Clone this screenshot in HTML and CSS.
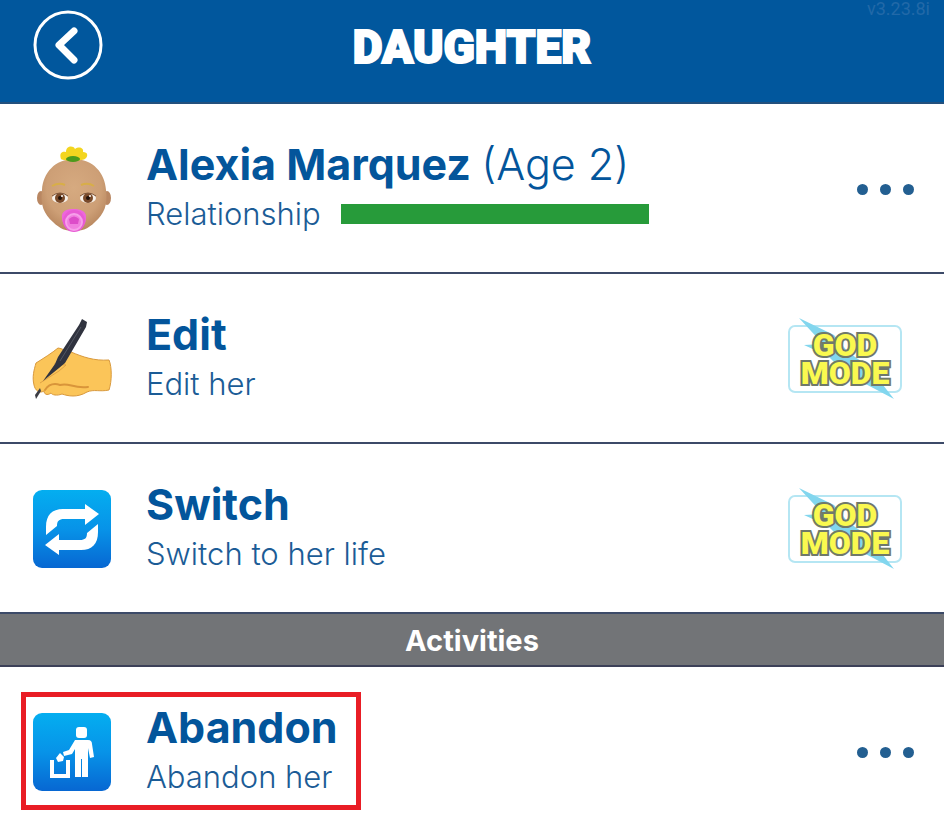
FILE: index.html
```
<!DOCTYPE html>
<html lang="en">
<head>
    <meta charset="UTF-8">
    <meta name="viewport" content="width=device-width, initial-scale=1.0">
    <title>Daughter</title>
    <link rel="stylesheet" href="styles.css">
</head>
<body>
    <header class="topbar">
        <button class="back" aria-label="Back">
            <svg viewBox="0 0 70 70" width="70" height="70">
                <circle cx="35" cy="35" r="33" fill="none" stroke="#fff" stroke-width="3"/>
                <path d="M41 21 L26 35 L41 50" fill="none" stroke="#fff" stroke-width="7" stroke-linecap="round" stroke-linejoin="round"/>
            </svg>
        </button>
        <h1>DAUGHTER</h1>
        <span class="version">v3.23.8i</span>
    </header>

    <main>
        <section class="row">
            <svg class="icon" viewBox="0 0 80 90" width="80" height="90">
                <defs>
                    <radialGradient id="skin" cx="50%" cy="40%" r="60%">
                        <stop offset="0" stop-color="#d6aa80"/>
                        <stop offset="0.7" stop-color="#cd9f76"/>
                        <stop offset="1" stop-color="#b98860"/>
                    </radialGradient>
                </defs>
                <ellipse cx="9" cy="54" rx="4" ry="7" fill="#b98762"/>
                <ellipse cx="75" cy="54" rx="4" ry="7" fill="#b98762"/>
                <path d="M42 15 C61 15 73 29 74 46 C76 61 72 70 63 78 C56 85 50 87 42 87 C34 87 28 85 21 78 C12 70 8 61 10 46 C11 29 23 15 42 15Z" fill="url(#skin)"/>
                <path d="M29 15 C27 9 30 7 34 8 C34 2 41 1 43 5 C47 2 52 4 51 8 C56 8 56 12 54 14 C53 17 33 18 29 15Z" fill="#f3d51f"/>
                <ellipse cx="41" cy="15" rx="7" ry="3" fill="#4c9a1c"/>
                <path d="M20 42 q7 -4 13 -1 M49 41 q7 -3 13 1" fill="none" stroke="#d8ae48" stroke-width="2"/>
                <ellipse cx="28" cy="54" rx="8" ry="5" fill="#f7f0e8"/>
                <ellipse cx="56" cy="54" rx="8" ry="5" fill="#f7f0e8"/>
                <circle cx="28" cy="54" r="5" fill="#7a4b2b"/>
                <circle cx="56" cy="54" r="5" fill="#7a4b2b"/>
                <circle cx="28" cy="54" r="2" fill="#23130b"/>
                <circle cx="56" cy="54" r="2" fill="#23130b"/>
                <circle cx="30" cy="52" r="1" fill="#fff"/>
                <circle cx="58" cy="52" r="1" fill="#fff"/>
                <path d="M20 52 q8 -6 16 0 M48 52 q8 -6 16 0" fill="none" stroke="#7d5539" stroke-width="1"/>
                <path d="M30 74 C29 66 36 65 42 65 C48 65 55 67 54 74 C54 80 51 83 47 83 L36 83 C32 82 30 78 30 74Z" fill="#ee66dc"/>
                <circle cx="42" cy="77" r="11" fill="#e85bd4"/>
                <circle cx="42" cy="78" r="8" fill="#f07fdf" stroke="#f79fea" stroke-width="2"/>
                <path d="M37 75 q5 -5 10 0 l-1 5 h-8z" fill="#dd4cc9"/>
            </svg>
            <div class="info">
                <h2>Alexia Marquez <span>(Age 2)</span></h2>
                <div class="stat">
                    <label for="relationship">Relationship</label>
                    <progress id="relationship" value="100" max="100"></progress>
                </div>
            </div>
            <button class="more" aria-label="More"><i></i><i></i><i></i></button>
        </section>

        <section class="row">
            <svg class="icon" viewBox="0 0 80 80" width="80" height="80">
                <path d="M2 66 C0 58 2 51 4 44 C12 39 20 34 26 29 C30 29 34 33 39 33 C51 38 62 42 77 41 C80 48 80 62 77 71 C68 73 62 70 55 73 C45 79 36 77 30 75 C25 77 20 76 19 74 C15 77 12 75 12 72 C7 75 3 71 2 66Z" fill="#fbc559" stroke="#d9993c" stroke-width="1" stroke-linejoin="round"/>
                <path d="M13 71 C17 65 22 64 28 66 C37 63 41 70 56 68" fill="none" stroke="#d9953a" stroke-width="2" stroke-linecap="round"/>
                <path d="M22 45 L34 46 L27 52 L8 64" fill="none" stroke="#dfa145" stroke-width="1"/>
                <path d="M50 0 L55 3 L54 8 L33 44 L27 49 L11 62 L23 45 L26 38 L47 6Z" fill="#30333f"/>
                <path d="M49 8 L28 42" stroke="#525662" stroke-width="1"/>
                <path d="M4 80 L3 76 L8 69 L9 72Z" fill="#3b3c44"/>
            </svg>
            <div class="info">
                <h2>Edit</h2>
                <p>Edit her</p>
            </div>
            <button class="god">
                <svg viewBox="0 0 114 82" width="114" height="82">
                    <path d="M11 0 L46 17 L60 34 L80 48 L106 81 L70 62 L48 46 L40 38 L16 27 L35 26Z" fill="#82d6ee"/>
                </svg>
                <span>GOD<br>MODE</span>
            </button>
        </section>

        <section class="row">
            <svg class="icon" viewBox="0 0 80 80" width="80" height="80">
                <defs>
                    <linearGradient id="sky" x1="0" y1="0" x2="0" y2="1">
                        <stop offset="0" stop-color="#04aef0"/>
                        <stop offset="0.5" stop-color="#0793e8"/>
                        <stop offset="1" stop-color="#0767d2"/>
                    </linearGradient>
                </defs>
                <rect x="1" y="1" width="78" height="78" rx="9" fill="url(#sky)"/>
                <path d="M14 46 V38 C14 26 20 20 31 20 H53 V15 L67 25 L53 36 V30 H32 C27 30 25 32 25 37Z" fill="#fff"/>
                <path d="M66 35 V43 C66 55 60 61 49 61 H27 V66 L13 56 L27 45 V51 H48 C53 51 55 49 55 44Z" fill="#fff"/>
            </svg>
            <div class="info">
                <h2>Switch</h2>
                <p>Switch to her life</p>
            </div>
            <button class="god">
                <svg viewBox="0 0 114 82" width="114" height="82">
                    <path d="M11 0 L46 17 L60 34 L80 48 L106 81 L70 62 L48 46 L40 38 L16 27 L35 26Z" fill="#82d6ee"/>
                </svg>
                <span>GOD<br>MODE</span>
            </button>
        </section>

        <h3 class="divider">Activities</h3>

        <section class="row last">
            <div class="marked">
                <svg class="icon" viewBox="0 0 80 80" width="80" height="80">
                    <rect x="1" y="1" width="78" height="78" rx="9" fill="url(#sky)"/>
                    <rect x="44" y="15" width="11" height="11" rx="3" fill="#fff"/>
                    <path d="M43 28 H56 C59 28 60 30 60 32 L62 45 L58 46 L56 36 V65 H50 V47 H49 V65 H43 V37 L40 42 L32 44 L31 40 L37 38Z" fill="#fff"/>
                    <path d="M28 41 L32 45 L31 49 L26 50 L24 46Z" fill="#fff"/>
                    <path d="M20 48 V64 H36 V48" fill="none" stroke="#fff" stroke-width="4"/>
                </svg>
                <div class="info">
                    <h2>Abandon</h2>
                    <p>Abandon her</p>
                </div>
            </div>
            <button class="more" aria-label="More"><i></i><i></i><i></i></button>
        </section>
    </main>
</body>
</html>
```

FILE: styles.css
```
* {
    box-sizing: border-box;
}
body {
    margin: 0;
    background-color: #ffffff;
    color: #03559b;
    font-family: Inter, Lato, sans-serif;
}
h1, h2, h3, p {
    margin: 0;
}
button {
    padding: 0;
    border: none;
    background: none;
    cursor: pointer;
}
svg {
    display: block;
}
.topbar {
    display: grid;
    grid-template-columns: 1fr auto 1fr;
    height: 104px;
    padding: 0 14px;
    background-color: #01579d;
    border-bottom: 2px solid #23507d;
}
.back {
    justify-self: start;
    align-self: start;
    margin: 10px 0 0 19px;
}
.topbar h1 {
    font-family: Roboto, sans-serif;
    font-size: 46px;
    line-height: 94px;
    font-weight: 900;
    color: #ffffff;
    -webkit-text-stroke: 2px #ffffff;
}
.version {
    justify-self: end;
    font-family: Roboto, sans-serif;
    font-size: 18px;
    line-height: 18px;
    color: #2269a8;
}
.row {
    display: flex;
    align-items: center;
    gap: 34px;
    padding: 35px 30px 33px 32px;
    border-bottom: 2px solid #3c4a68;
}
.row.last {
    padding-bottom: 24px;
    border-bottom: none;
}
.icon {
    flex: none;
}
.info {
    flex: 1;
}
.info h2 {
    font-size: 43px;
    line-height: 50px;
    font-weight: 700;
}
.info h2 span {
    font-weight: 300;
}
.info p, .stat {
    font-size: 31px;
    line-height: 50px;
    font-weight: 300;
    color: #1b5c96;
}
.stat {
    display: flex;
    align-items: center;
    gap: 20px;
}
progress {
    appearance: none;
    width: 308px;
    height: 20px;
    border: none;
    background-color: #dddddd;
}
progress::-webkit-progress-bar {
    background-color: #dddddd;
}
progress::-webkit-progress-value {
    background-color: #279b3a;
}
.more {
    display: flex;
    gap: 12px;
    padding: 8px 0;
}
.more i {
    width: 11px;
    height: 11px;
    border-radius: 50%;
    background-color: #235f91;
}
.god {
    position: relative;
    width: 114px;
    height: 68px;
    margin-right: 12px;
    border: 2px solid #b5e6f3;
    border-radius: 7px;
    font-family: Roboto, sans-serif;
    font-size: 32px;
    line-height: 28px;
    font-weight: 900;
    color: #faf94f;
    -webkit-text-stroke: 4px #70796a;
    paint-order: stroke fill;
}
/* lightning bolt behind the words, sticks out of the frame */
.god svg {
    position: absolute;
    left: -2px;
    top: -9px;
}
.god span {
    display: block;
    position: relative;
}
.divider {
    height: 53px;
    background-color: #727477;
    border-bottom: 2px solid #3c4058;
    color: #ffffff;
    font-size: 29px;
    line-height: 54px;
    font-weight: 700;
    text-align: center;
}
.marked {
    position: relative;
    display: flex;
    flex: 1;
    align-items: center;
    gap: 34px;
}
/* red frame round the item */
.marked::after {
    content: "";
    position: absolute;
    left: -11px;
    top: -10px;
    width: 340px;
    height: 118px;
    border: 5px solid #e91d25;
    box-sizing: border-box;
}
```
